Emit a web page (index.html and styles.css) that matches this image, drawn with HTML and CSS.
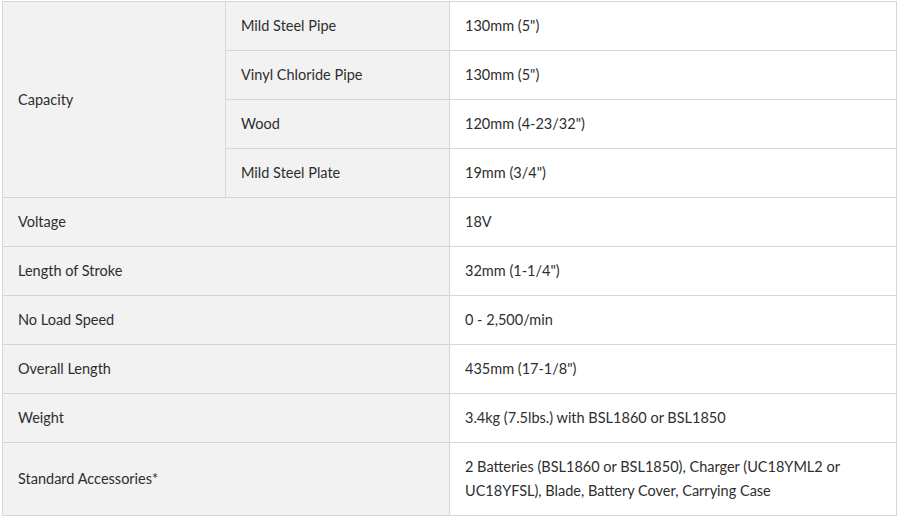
FILE: index.html
```html
<!DOCTYPE html>
<html>
<head>
<meta charset="utf-8">
<link rel="stylesheet" href="styles.css">
</head>
<body>
<table class="spec">
  <colgroup>
    <col class="c1"><col class="c2"><col class="c3">
  </colgroup>
  <tbody>
    <tr><th rowspan="4">Capacity</th><th class="sub">Mild Steel Pipe</th><td>130mm (5")</td></tr>
    <tr><th class="sub">Vinyl Chloride Pipe</th><td>130mm (5")</td></tr>
    <tr><th class="sub">Wood</th><td>120mm (4-23/32")</td></tr>
    <tr><th class="sub">Mild Steel Plate</th><td>19mm (3/4")</td></tr>
    <tr><th colspan="2">Voltage</th><td>18V</td></tr>
    <tr><th colspan="2">Length of Stroke</th><td>32mm (1-1/4")</td></tr>
    <tr><th colspan="2">No Load Speed</th><td>0 - 2,500/min</td></tr>
    <tr><th colspan="2">Overall Length</th><td>435mm (17-1/8")</td></tr>
    <tr><th colspan="2">Weight</th><td>3.4kg (7.5lbs.) with BSL1860 or BSL1850</td></tr>
    <tr><th colspan="2">Standard Accessories*</th><td>2 Batteries (BSL1860 or BSL1850), Charger (UC18YML2 or UC18YFSL), Blade, Battery Cover, Carrying Case</td></tr>
  </tbody>
</table>
</body>
</html>
```
FILE: styles.css
```css
html, body {
  background: #ffffff;
}
body {
  margin: 1px 0 0 2px;
  font-family: Lato, "Liberation Sans", sans-serif;
  font-size: 14.5px;
  color: #2e2e2e;
}
.spec {
  border-collapse: collapse;
  width: 894px;
  table-layout: fixed;
}
.c1 { width: 223px; }
.c2 { width: 224px; }
.c3 { width: 447px; }
.spec th, .spec td {
  border: 1px solid #d6d6d6;
  padding: 12px 15px;
  line-height: 24px;
  text-align: left;
  vertical-align: middle;
  font-weight: normal;
}
.spec th {
  background: #f2f2f2;
}
.spec td {
  background: #ffffff;
}
```
